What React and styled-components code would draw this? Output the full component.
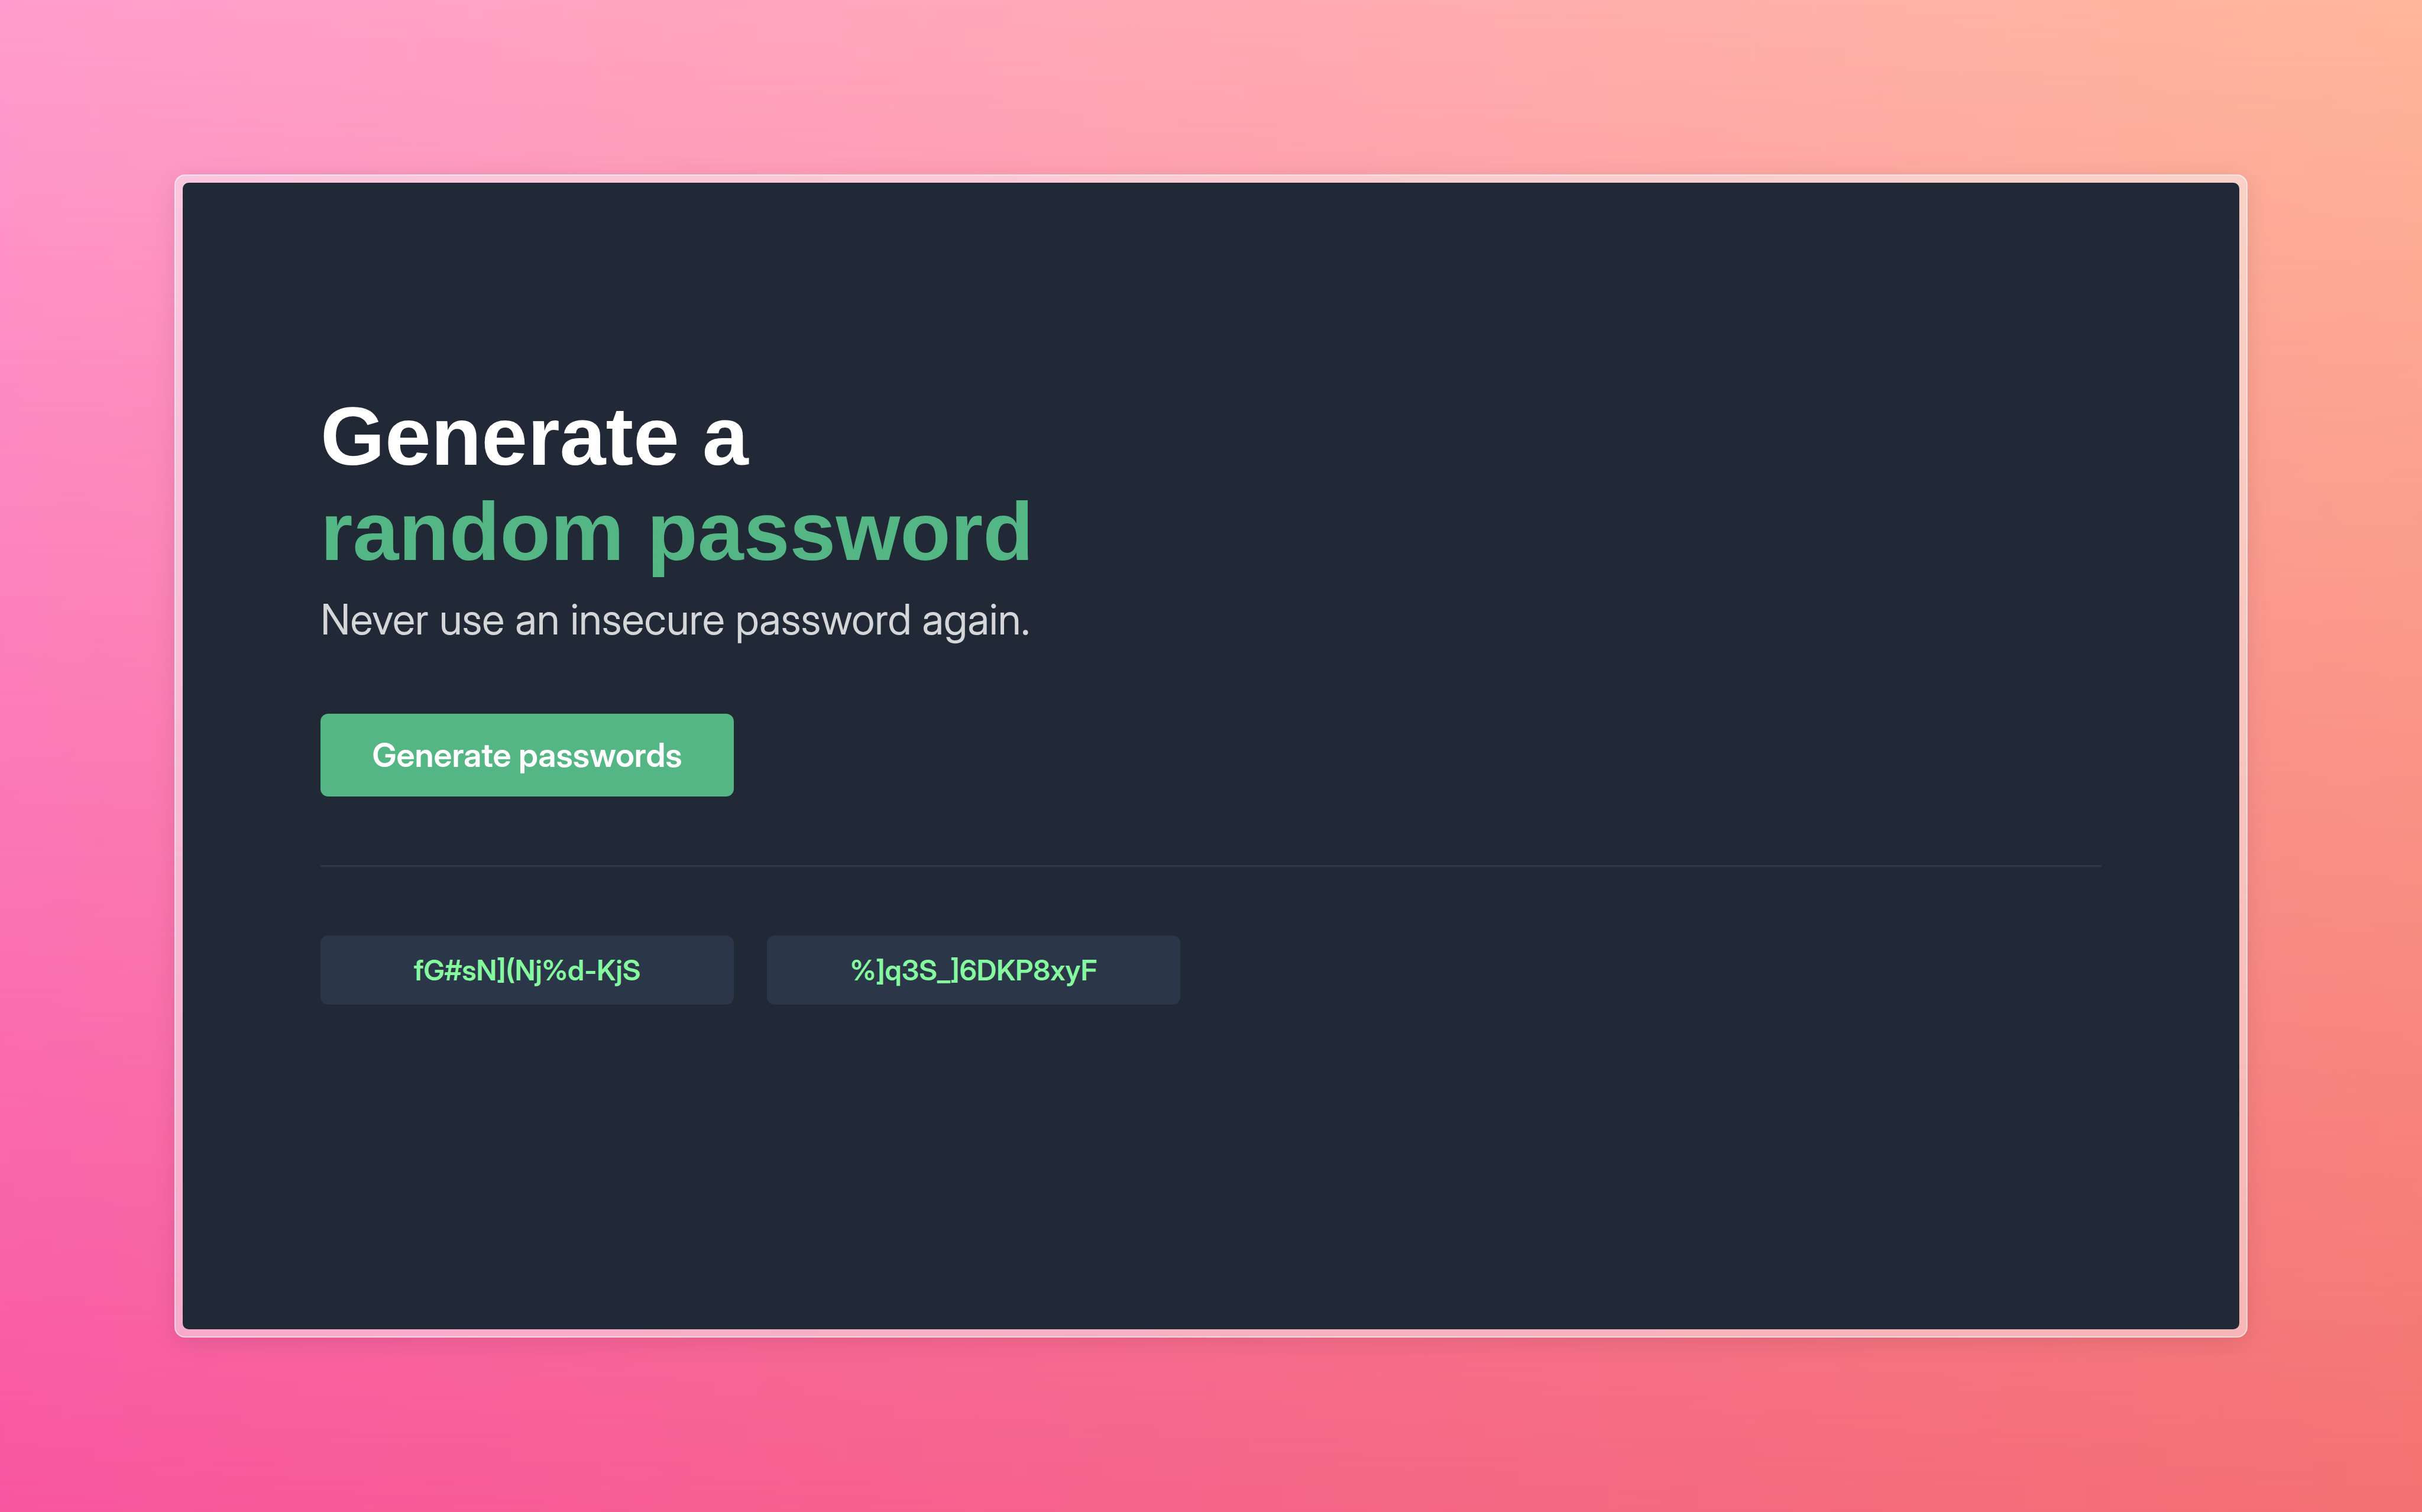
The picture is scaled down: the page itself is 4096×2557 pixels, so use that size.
import React, { useState } from "react";
import styled, { createGlobalStyle } from "styled-components";

const Global = createGlobalStyle`
  *, *::before, *::after { box-sizing: border-box; }
  body { margin: 0; }
`;

const Backdrop = styled.div`
  position: relative;
  isolation: isolate;
  min-height: 100vh;
  display: flex;
  padding: 295px;
  font-family: "Inter Display", Inter, "Liberation Sans", sans-serif;
  background: linear-gradient(to right, #ff9ece, #ffb79b);

  &::before {
    content: "";
    position: absolute;
    inset: 0;
    z-index: -1;
    background: linear-gradient(to right, #f8569f, #f47172);
    mask-image: linear-gradient(to bottom, transparent, #000);
  }
`;

const Frame = styled.main`
  flex: 1;
  display: flex;
  padding: 12px;
  border: 2px solid rgba(255, 255, 255, 0.5);
  border-radius: 18px;
  background: rgba(246, 246, 246, 0.5);
  box-shadow: 0 8px 40px rgba(0, 0, 0, 0.1);
`;

const Panel = styled.section`
  flex: 1;
  padding: 348px 233px 116px;
  border-radius: 10px;
  background: #222936;
`;

const Title = styled.h1`
  margin: 0;
  font-family: "Liberation Sans", Arial, sans-serif;
  font-size: 140px;
  line-height: 161px;
  font-weight: 700;
  color: #ffffff;
`;

const Accent = styled.span`
  display: block;
  color: #55b685;
`;

const Lead = styled.p`
  margin: 18px 0 0;
  font-size: 71px;
  line-height: 100px;
  color: #d5d6d8;
`;

const BaseButton = styled.button`
  display: block;
  width: 699px;
  border: 0;
  border-radius: 13px;
  font-family: inherit;
  font-weight: 600;
`;

const GenerateButton = styled(BaseButton)`
  height: 140px;
  margin-top: 110px;
  font-size: 56px;
  color: #ffffff;
  background: #55b685;
`;

const Divider = styled.hr`
  height: 3px;
  margin: 116px 0;
  border: 0;
  background: #2d3748;
`;

const Passwords = styled.div`
  display: flex;
  gap: 56px;
`;

const PasswordButton = styled(BaseButton)`
  height: 117px;
  font-size: 48px;
  color: #86f8a0;
  background: #2b3648;
`;

export default function App() {
  const [passwords] = useState(["fG#sN](Nj%d-KjS", "%]q3S_]6DKP8xyF"]);
  return (
    <Backdrop>
      <Global />
      <Frame>
        <Panel>
          <Title>
            Generate a <Accent>random password</Accent>
          </Title>
          <Lead>Never use an insecure password again.</Lead>
          <GenerateButton type="button">Generate passwords</GenerateButton>
          <Divider />
          <Passwords>
            {passwords.map((p) => (
              <PasswordButton type="button" key={p}>{p}</PasswordButton>
            ))}
          </Passwords>
        </Panel>
      </Frame>
    </Backdrop>
  );
}
